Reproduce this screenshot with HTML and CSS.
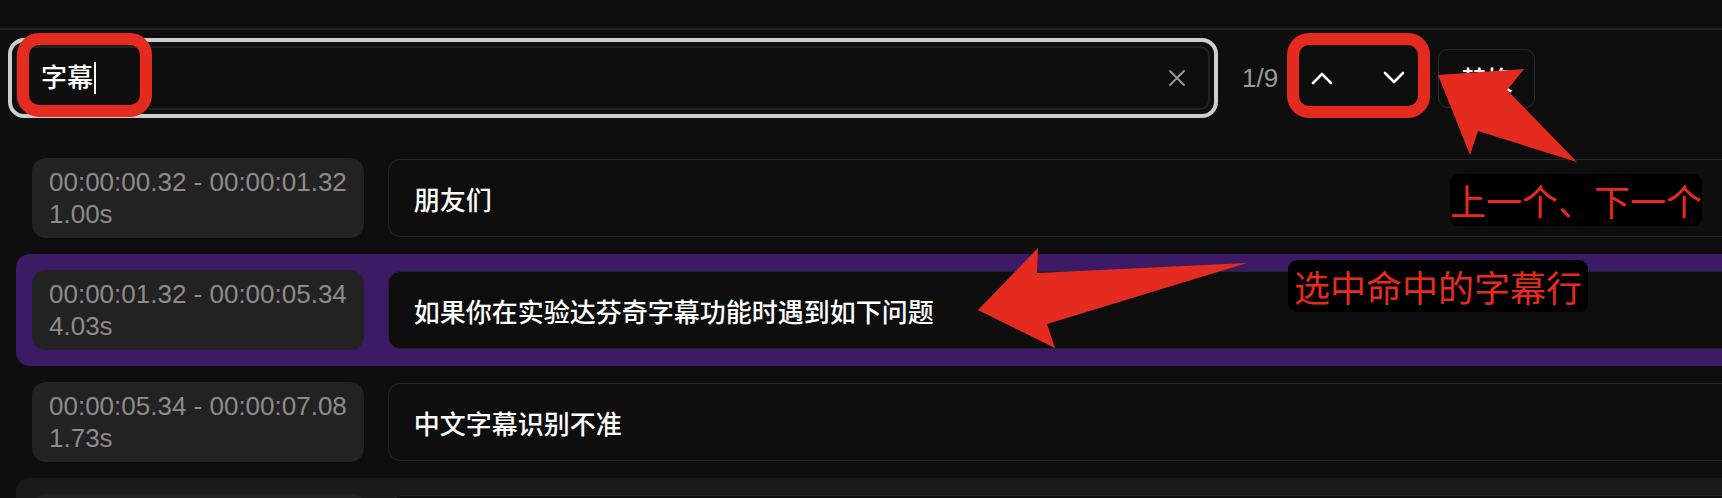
FILE: index.html
```html
<!DOCTYPE html>
<html lang="zh-CN">
<head>
<meta charset="utf-8">
<title>字幕搜索</title>
<link rel="stylesheet" href="styles.css">
</head>
<body>
<div class="page">
  <div class="topbar"></div>

  <div class="search-row">
    <div class="search-ring">
      <div class="search-input">
        <span class="query">字幕</span><span class="caret"></span>
        <span class="spacer"></span>
        <svg class="clear" width="18" height="18" viewBox="0 0 18 18"><path d="M2 2L16 16M16 2L2 16" stroke="#9a9a9a" stroke-width="1.8" fill="none" stroke-linecap="round"/></svg>
      </div>
    </div>
    <span class="count">1/9</span>
    <div class="nav">
      <button class="nav-btn"><svg width="22" height="14" viewBox="0 0 22 14"><polyline points="2,12 11,3 20,12" stroke="#fff" stroke-width="2.6" fill="none" stroke-linecap="round" stroke-linejoin="round"/></svg></button>
      <button class="nav-btn"><svg width="22" height="14" viewBox="0 0 22 14"><polyline points="2,2 11,11 20,2" stroke="#fff" stroke-width="2.6" fill="none" stroke-linecap="round" stroke-linejoin="round"/></svg></button>
    </div>
    <button class="replace">替换</button>
  </div>

  <div class="list">
    <div class="row">
      <div class="time">00:00:00.32 - 00:00:01.32<br>1.00s</div>
      <div class="text-box">朋友们</div>
    </div>
    <div class="row active">
      <div class="time">00:00:01.32 - 00:00:05.34<br>4.03s</div>
      <div class="text-box">如果你在实验达芬奇字幕功能时遇到如下问题</div>
    </div>
    <div class="row">
      <div class="time">00:00:05.34 - 00:00:07.08<br>1.73s</div>
      <div class="text-box">中文字幕识别不准</div>
    </div>
    <div class="row hover">
      <div class="time time-empty"></div>
      <div class="text-box"></div>
    </div>
  </div>

  <div class="hl hl-query"></div>
  <div class="hl hl-nav"></div>
  <svg class="arrows" width="1722" height="498" viewBox="0 0 1722 498">
    <polygon points="1438,75 1524,69 1507,90 1577,162 1478,131 1470,155" fill="#e52b20"/>
    <polygon points="978,310 1038,248 1037,273 1247,263 1047,324 1055,348" fill="#e52b20"/>
  </svg>
  <div class="label label-nav">上一个、下一个</div>
  <div class="label label-row">选中命中的字幕行</div>
</div>
</body>
</html>
```

FILE: styles.css
```css
* { box-sizing: border-box; }

html, body {
  margin: 0;
  padding: 0;
  background: #0e0e0e;
  overflow: hidden;
}

body {
  width: 1722px;
  height: 498px;
  font-family: "Liberation Sans", "Noto Sans CJK SC", sans-serif;
  color: #f2f2f2;
}

.page {
  position: relative;
  width: 1722px;
  height: 498px;
  overflow: hidden;
}

.topbar {
  height: 30px;
  border-bottom: 2px solid #222;
}

.search-row {
  display: flex;
  align-items: center;
  padding-top: 8px;
  padding-left: 8px;
}

.search-ring {
  flex: none;
  width: 1210px;
  height: 80px;
  border: 4px solid #cecece;
  border-radius: 16px;
  padding: 4px;
}

.search-input {
  height: 64px;
  border: 2px solid #222;
  border-radius: 10px;
  display: flex;
  align-items: center;
  padding: 0 22px 0 23px;
}

.query {
  font-size: 26px;
  font-weight: 500;
  color: #fff;
  line-height: 32px;
}

.caret {
  display: inline-block;
  width: 2px;
  height: 32px;
  background: #fff;
  margin-left: 1px;
}

.spacer { flex: 1; }

.clear { display: block; }

.count {
  margin-left: 24px;
  font-size: 26px;
  color: #999;
}

.nav {
  display: flex;
  gap: 24px;
  margin-left: 20px;
}

.nav-btn {
  width: 48px;
  height: 48px;
  border: 0;
  padding: 0;
  background: transparent;
  display: flex;
  align-items: center;
  justify-content: center;
}

.replace {
  margin-left: 20px;
  width: 97px;
  height: 59px;
  background: transparent;
  border: 1.5px solid #2a2a2a;
  border-radius: 10px;
  font-family: "Liberation Sans", "Noto Sans CJK SC", sans-serif;
  font-size: 26px;
  font-weight: 500;
  color: #fff;
  padding: 0;
}

.list {
  margin-top: 24px;
}

.row {
  display: flex;
  align-items: center;
  gap: 24px;
  width: 1900px;
  margin-left: 16px;
  padding: 16px;
  border-radius: 14px;
}

.row.active { background: #3d1a66; }
.row.hover { background: #1a1a1a; }

.time {
  flex: none;
  background: #222;
  border-radius: 14px;
  padding: 8px 17px 8px 17px;
  font-size: 26px;
  line-height: 32px;
  color: #8c8c8c;
  white-space: nowrap;
}

.time-empty {
  width: 334px;
  height: 80px;
}

.text-box {
  flex: 1;
  height: 78px;
  display: flex;
  align-items: center;
  padding: 0 25px;
  border: 1.5px solid #262626;
  border-radius: 12px;
  background: #0e0e0e;
  font-size: 26px;
  font-weight: 500;
  color: #fff;
}

/* annotation overlays */
.hl {
  position: absolute;
  border: 12px solid #e52b20;
  border-radius: 22px;
}

.hl-query { left: 17px; top: 33px; width: 135px; height: 84px; }
.hl-nav { left: 1287px; top: 33px; width: 143px; height: 85px; }

.arrows {
  position: absolute;
  left: 0;
  top: 0;
}

.label {
  position: absolute;
  background: #000;
  border-radius: 9px;
  color: #e52b20;
  font-family: "Noto Sans CJK SC", sans-serif;
  font-size: 36px;
  line-height: 52px;
  height: 52px;
  white-space: nowrap;
}

.label-nav { left: 1450px; top: 174px; width: 252px; padding: 0; }
.label-row { left: 1288px; top: 260px; width: 300px; padding: 0 6px; }
```
